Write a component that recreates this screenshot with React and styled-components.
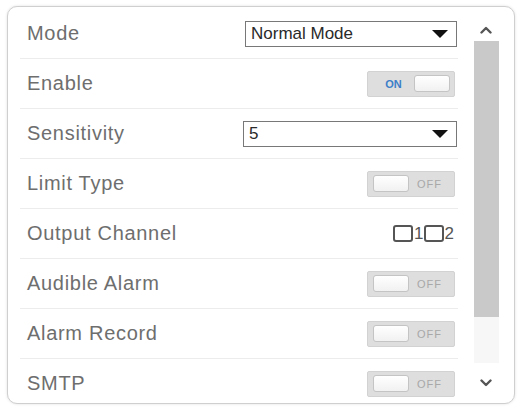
import React from 'react'
import styled, { createGlobalStyle } from 'styled-components'

const GlobalStyle = createGlobalStyle`
  html, body {
    margin: 0;
    padding: 0;
    background: #ffffff;
  }
  body {
    font-family: "Liberation Sans", Arial, sans-serif;
  }
`

const Page = styled.div`
  width: 523px;
  height: 412px;
  padding: 6px 0 0 7px;
  box-sizing: border-box;
`

const Panel = styled.div`
  width: 508px;
  height: 398px;
  box-sizing: border-box;
  border: 1px solid #cfcfcf;
  border-radius: 10px;
  box-shadow: 0 0 3px rgba(0, 0, 0, .12);
  background: #fff;
  display: flex;
  overflow: hidden;
`

const List = styled.div`
  width: 438px;
  margin-left: 12px;
  padding-top: 2px;
  overflow: hidden;
`

const Row = styled.div`
  height: 50px;
  box-sizing: border-box;
  display: flex;
  align-items: center;
  justify-content: space-between;
  padding: 0 1px 0 7px;
  border-bottom: 1px solid #ececec;
`

const Label = styled.span`
  font-size: 20px;
  letter-spacing: 0.7px;
  color: #6e6e6e;
`

const Select = styled.div`
  width: ${props => props.width}px;
  height: 26px;
  box-sizing: border-box;
  border: 1px solid #787878;
  background: #fff;
  display: flex;
  align-items: center;
  justify-content: space-between;
  padding: 0 8px 0 5px;
  font-size: 17px;
  color: #2a2a2a;
`

const Caret = styled.span`
  width: 0;
  height: 0;
  border-left: 8px solid transparent;
  border-right: 8px solid transparent;
  border-top: 8px solid #111;
`

const Toggle = styled.div`
  width: 88px;
  height: 26px;
  box-sizing: border-box;
  margin-right: 2px;
  border: 1px solid #d2d2d2;
  border-radius: 2px;
  background: #dedede;
  display: flex;
  flex-direction: ${props => props.on ? 'row' : 'row-reverse'};
  align-items: center;
  padding: 0 4px 0 5px;
`

const ToggleText = styled.span`
  flex: 1;
  text-align: center;
  font-size: 11px;
  font-weight: ${props => props.on ? 700 : 400};
  color: ${props => props.on ? '#3c7fc8' : '#a8a8a8'};
  letter-spacing: ${props => props.on ? '0' : '1px'};
`

const Knob = styled.span`
  width: 36px;
  height: 17px;
  box-sizing: border-box;
  border: 1px solid #c4c4c4;
  border-radius: 3px;
  background: linear-gradient(#ffffff, #f1f1f1);
`

const Channels = styled.div`
  display: flex;
  align-items: center;
  font-size: 17px;
  color: #555;
  margin-right: 3px;
`

const Check = styled.span`
  width: 20px;
  height: 17px;
  box-sizing: border-box;
  border: 2px solid #555;
  border-radius: 3px;
  margin-right: 1px;
`

const Scroll = styled.div`
  width: 28px;
  margin-left: 14px;
  display: flex;
  flex-direction: column;
  align-items: center;
`

const Arrow = styled.div`
  height: ${props => props.h}px;
  box-sizing: border-box;
  display: flex;
  align-items: ${props => props.up ? 'flex-end' : 'center'};
  justify-content: center;
  padding-bottom: ${props => props.up ? '7px' : '0'};
`

const Thumb = styled.div`
  width: 25px;
  height: 276px;
  background: #c9c9c9;
`

const Track = styled.div`
  width: 25px;
  flex: 1;
  background: #f7f7f7;
`

function Chevron({ up }) {
  return (
    <svg width="12" height="8" viewBox="0 0 12 8">
      <polyline
        points={up ? '1.5,6.5 6,2 10.5,6.5' : '1.5,1.5 6,6 10.5,1.5'}
        fill="none"
        stroke="#555"
        strokeWidth="2.4"
        strokeLinecap="round"
        strokeLinejoin="round"
      />
    </svg>
  )
}

function Switch({ on }) {
  return (
    <Toggle on={on}>
      <ToggleText on={on}>{on ? 'ON' : 'OFF'}</ToggleText>
      <Knob />
    </Toggle>
  )
}

const rows = [
  { label: 'Mode', type: 'select', value: 'Normal Mode', width: 212 },
  { label: 'Enable', type: 'switch', on: true },
  { label: 'Sensitivity', type: 'select', value: '5', width: 214 },
  { label: 'Limit Type', type: 'switch', on: false },
  { label: 'Output Channel', type: 'channels' },
  { label: 'Audible Alarm', type: 'switch', on: false },
  { label: 'Alarm Record', type: 'switch', on: false },
  { label: 'SMTP', type: 'switch', on: false },
]

export default function App() {
  return (
    <Page>
      <GlobalStyle />
      <Panel>
        <List>
          {rows.map(row => (
            <Row key={row.label}>
              <Label>{row.label}</Label>
              {row.type === 'select' ? (
                <Select width={row.width}>
                  <span>{row.value}</span>
                  <Caret />
                </Select>
              ) : null}
              {row.type === 'switch' ? <Switch on={row.on} /> : null}
              {row.type === 'channels' ? (
                <Channels>
                  <Check />1<Check />2
                </Channels>
              ) : null}
            </Row>
          ))}
        </List>
        <Scroll>
          <Arrow up h={34}><Chevron up /></Arrow>
          <Thumb />
          <Track />
          <Arrow h={40}><Chevron /></Arrow>
        </Scroll>
      </Panel>
    </Page>
  )
}
